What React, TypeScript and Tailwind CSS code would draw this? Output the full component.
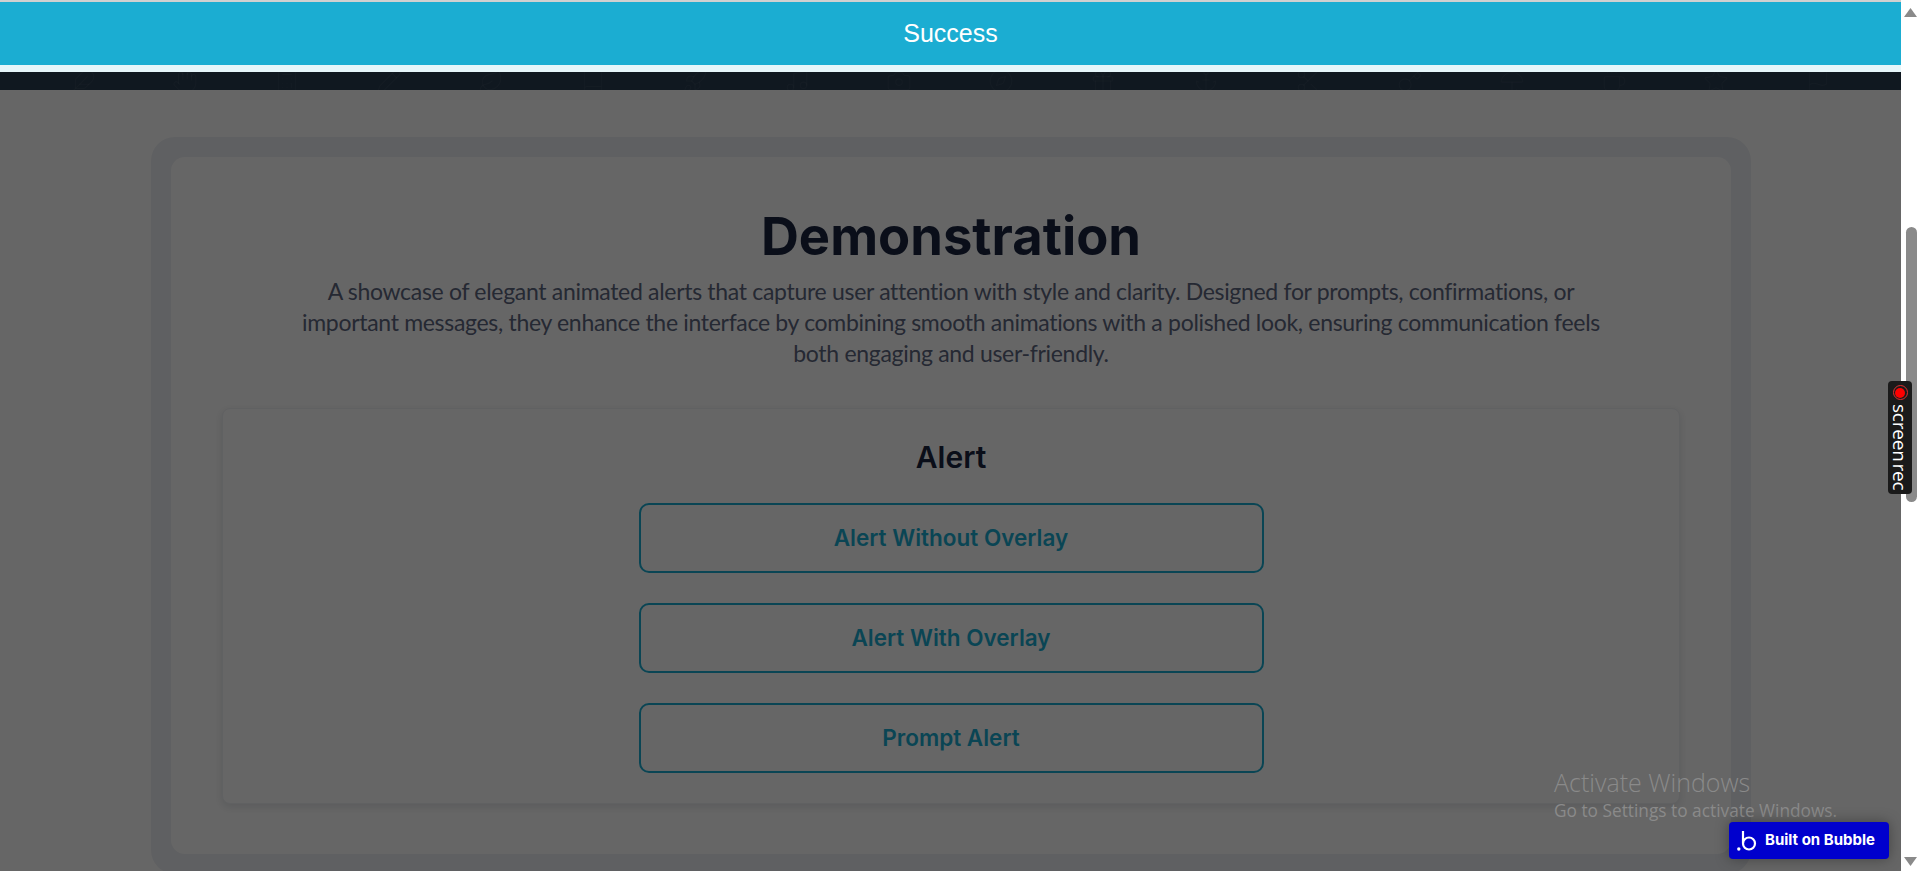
import React from 'react';
import { Hand, Pencil, Calculator, Music, Camera, Book, Rocket, Feather, Compass, Gift, Anchor, Scissors, Leaf, Key, Umbrella, Coffee, Star, Flag } from 'lucide-react';

const doodles = [Feather, Hand, Calculator, Pencil, Leaf, Book, Rocket, Music, Camera, Compass, Gift, Anchor, Scissors, Key, Umbrella, Coffee, Star, Flag];
const buttons = ['Alert Without Overlay', 'Alert With Overlay', 'Prompt Alert'];

const BubbleLogo = () => (
  <svg width="20" height="24" viewBox="0 0 20 24" fill="none" className="shrink-0">
    <circle cx="12" cy="14.5" r="6" stroke="white" strokeWidth="2.2" />
    <path d="M6 2v12" stroke="white" strokeWidth="2.2" />
    <circle cx="1.8" cy="20" r="1.7" fill="white" />
  </svg>
);

export default function App() {
  return (
    <div className="flex h-[871px] w-full overflow-hidden bg-white font-['Inter',sans-serif]">
      <div className="relative flex-1 overflow-hidden">
        {/* Page behind the overlay */}
        <div className="flex h-full flex-col bg-white">
          <div className="h-[72px] shrink-0" />
          <div className="flex h-[18px] shrink-0 items-start justify-between overflow-hidden bg-[#283c50] px-[70px] text-white/[0.05]">
            {doodles.map((Icon, i) => (
              <Icon key={i} size={26} strokeWidth={1} className="-mt-1 shrink-0" />
            ))}
          </div>

          <div className="ml-[151px] mr-[150px] mt-[47px] h-[737px] shrink-0 rounded-[24px] bg-[#eef0f4] p-5">
            <div className="flex h-full flex-col items-center rounded-[14px] bg-white px-[51px] pt-[49px]">
              <h1 className="text-[52.5px] font-bold leading-[60px] text-[#1a2540]">Demonstration</h1>
              <p className="mt-2.5 w-[1310px] text-center font-['Lato',sans-serif] text-[23px] leading-[31px] tracking-[-0.31px] text-[#5c6680]">
                A showcase of elegant animated alerts that capture user attention with style and clarity. Designed for prompts, confirmations, or important messages, they enhance the interface by combining smooth animations with a polished look, ensuring communication feels both engaging and user-friendly.
              </p>
              <div className="mt-[39px] flex w-full flex-col items-center gap-[30px] rounded-lg border border-[#f0f2f5] bg-white p-[30px] shadow-[0_3px_8px_rgba(20,30,50,0.12)]">
                <h2 className="translate-y-px text-[30px] font-semibold leading-[34px] text-[#1a2540]">Alert</h2>
                {buttons.map((label) => (
                  <button
                    key={label}
                    className="h-[70px] w-[625px] rounded-[10px] border-2 border-[#1badd2] text-[22.5px] font-semibold text-[#1badd2]"
                  >
                    {label}
                  </button>
                ))}
              </div>
            </div>
          </div>
        </div>

        <div className="absolute inset-0 bg-black/60" />

        {/* Success alert */}
        <div className="absolute inset-x-0 top-0 flex flex-col">
          <div className="h-0.5 bg-[#d0d0d0]" />
          <div className="flex h-[63px] items-center justify-center bg-[#1badd2] font-['Liberation_Sans',sans-serif] text-[25px] text-white">
            Success
          </div>
          <div className="h-[7px] bg-[#e6f6fa]" />
        </div>

        {/* Windows watermark */}
        <div className="absolute left-[1554px] top-[766px] font-['Open_Sans',sans-serif] text-[#8a8a8a]">
          <div className="text-[25px] font-light leading-[32px]">Activate Windows</div>
          <div className="mt-0.5 text-[17.3px] leading-[22px]">Go to Settings to activate Windows.</div>
        </div>

        {/* Bubble badge */}
        <div className="absolute left-[1729px] top-[822px] flex h-[37px] w-[160px] items-center gap-2 rounded bg-[#0000cd] pl-2 text-[15px] font-bold text-white shadow-[0_0_14px_rgba(0,0,0,0.35)]">
          <BubbleLogo />
          <span>Built on Bubble</span>
        </div>
      </div>

      {/* Scrollbar */}
      <div className="flex w-[19px] shrink-0 flex-col items-center bg-white">
        <svg width="13" height="9" viewBox="0 0 13 9" className="mt-2 shrink-0">
          <path d="M6.5 0L13 9H0z" fill="#8a8a8a" />
        </svg>
        <div className="ml-px mt-[210px] h-[275px] w-[11px] rounded-full bg-[#8a8a8a]" />
        <svg width="13" height="9" viewBox="0 0 13 9" className="mt-[355px] shrink-0">
          <path d="M0 0h13L6.5 9z" fill="#8a8a8a" />
        </svg>
      </div>

      {/* Screen recorder tab */}
      <div className="absolute left-[1888px] top-[381px] flex h-[113px] w-6 flex-col items-center rounded bg-[#1a1a1a] pt-1">
        <span className="flex h-[15px] w-[15px] shrink-0 items-center justify-center rounded-full border border-[#e03030]">
          <span className="h-[10px] w-[10px] rounded-full bg-[#ff0000]" />
        </span>
        <span className="mt-1 whitespace-nowrap font-['Open_Sans',sans-serif] text-[19px] leading-[24px] tracking-[-0.2px] text-white [word-spacing:-3px] [writing-mode:vertical-rl]">
          screen rec
        </span>
      </div>
    </div>
  );
}
